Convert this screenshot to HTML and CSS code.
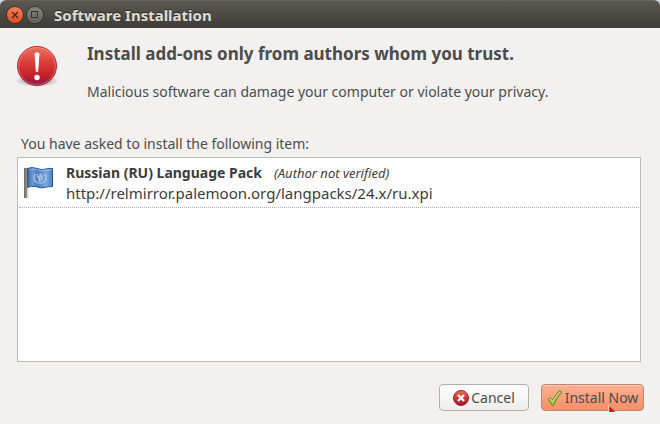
FILE: index.html
```
<!DOCTYPE html>
<html lang="en">
<head>
<meta charset="UTF-8">
<title>Software Installation</title>
<link rel="stylesheet" href="styles.css">
</head>
<body>

<div class="window">

	<header class="titlebar">
		<button class="winbtn close" type="button" aria-label="Close">
			<svg width="16" height="16" viewBox="0 0 16 16"><path d="M5 5l6 6M11 5l-6 6" stroke="#4a2115" stroke-width="1.200" fill="none"/></svg>
		</button>
		<button class="winbtn max" type="button" aria-label="Maximize">
			<svg width="16" height="16" viewBox="0 0 16 16"><rect x="4.500" y="4.500" width="6" height="6" stroke="#33322e" fill="none"/></svg>
		</button>
		<span class="title">Software Installation</span>
	</header>

	<main class="content">
		<div class="warning">
			<svg class="alert" width="44" height="44" viewBox="0 0 44 44">
				<defs>
					<radialGradient id="shadow">
						<stop offset="0.6" stop-color="#000" stop-opacity="0.2"/>
						<stop offset="1" stop-color="#000" stop-opacity="0"/>
					</radialGradient>
					<linearGradient id="red" x1="0" y1="0" x2="0" y2="1">
						<stop offset="0" stop-color="#ed7059"/>
						<stop offset="0.45" stop-color="#d73a38"/>
						<stop offset="0.75" stop-color="#c5202b"/>
						<stop offset="1" stop-color="#84184d"/>
					</linearGradient>
				</defs>
				<ellipse cx="22" cy="37" rx="22" ry="6" fill="url(#shadow)"/>
				<circle cx="22" cy="22" r="19.5" fill="url(#red)" stroke="#b72935"/>
				<circle cx="22" cy="22" r="18.4" fill="none" stroke="#fff" stroke-opacity="0.25"/>
				<path d="M20 9.500q2-1.600 4 0l-1.300 18q-.7.700-1.400 0z" fill="#fff" stroke="#fff" stroke-linejoin="round"/>
				<circle cx="22" cy="33.5" r="2.7" fill="#fff"/>
			</svg>
			<div class="message">
				<h1>Install add-ons only from authors whom you trust.</h1>
				<p>Malicious software can damage your computer or violate your privacy.</p>
			</div>
		</div>

		<p class="intro" id="intro">You have asked to install the following item:</p>

		<ul class="list" aria-labelledby="intro">
			<li class="item">
				<svg class="flag" width="32" height="32" viewBox="0 0 32 32">
					<defs>
						<linearGradient id="pole" x1="0" y1="0" x2="1" y2="0">
							<stop offset="0" stop-color="#6a6c64"/>
							<stop offset="0.5" stop-color="#8c8e87"/>
							<stop offset="0.6" stop-color="#d0d1cc"/>
							<stop offset="1" stop-color="#f4f4f2"/>
						</linearGradient>
						<linearGradient id="blue" x1="0" y1="0" x2="1" y2="0">
							<stop offset="0" stop-color="#3465a4"/>
							<stop offset="0.2" stop-color="#6c9bd2"/>
							<stop offset="0.4" stop-color="#4a7ebd"/>
							<stop offset="0.75" stop-color="#7ba8dc"/>
							<stop offset="1" stop-color="#4d80be"/>
						</linearGradient>
					</defs>
					<rect x="1" y="1" width="5" height="30" fill="url(#pole)"/>
					<path d="M4.500 1.500Q9 -0.500 14 1.500T23 2Q26 1 29.500 1.500V19.500Q25 19.500 21 20.500T13 19.500Q8 18.500 4.500 20.500z" fill="url(#blue)" stroke="#2b5794"/>
					<path d="M6 2.800Q10 1 14 2.700T23 3.200L28.300 2.700" fill="none" stroke="#a5c4ea" stroke-opacity="0.7"/>
					<g fill="none" stroke="#c5d9f0" stroke-opacity="0.7" stroke-width="1.300">
						<path d="M12.500 7q-3 4 0 7.500q2 2 5 1.500M21.500 7q3 4 0 7.500q-2 2-4.500 1.500"/>
						<path d="M14 7l2 5 2-5.500M15 13.500q2 1 4-1.500v-4M14 10h5M17 7v7"/>
					</g>
				</svg>
				<div class="info">
					<div class="head">
						<strong class="name">Russian (RU) Language Pack</strong>
						<em class="signer">(Author not verified)</em>
					</div>
					<div class="url">http://relmirror.palemoon.org/langpacks/24.x/ru.xpi</div>
				</div>
			</li>
		</ul>

		<div class="buttons">
			<button class="btn" type="button">
				<svg width="16" height="16" viewBox="0 0 16 16">
					<circle cx="8" cy="8" r="7.500" fill="url(#red)" stroke="#a91f30"/>
					<path d="M5 5l6 6M11 5l-6 6" stroke="#fff" stroke-width="2.400"/>
				</svg>
				Cancel
			</button>
			<button class="btn install" type="button">
				<svg width="16" height="16" viewBox="0 0 16 16">
					<path d="M1 9.500l2.500-1.800 2.300 2.800Q8 4.500 12.500 0.800l2.300 1.600Q9.500 7.500 6.500 15.200h-1.500Q3.500 12 1 9.500z" fill="#a3c644" stroke="#5c8518" stroke-linejoin="round"/>
					<path d="M2.500 9.500l1-.6 2.300 3Q8.500 5.500 12.500 2.200" fill="none" stroke="#d3e68c"/>
				</svg>
				Install Now
				<svg class="cursor" width="8" height="8" viewBox="0 0 8 8"><path d="M0.500 0v7.500h7z" fill="#fff"/><path d="M1.200 1v6h6z" fill="#f00008"/></svg>
			</button>
		</div>
	</main>

</div>

</body>
</html>
```
FILE: styles.css
```
* {
	box-sizing: border-box;
}

body {
	margin: 0;
	background: #d6dbe3;
	font-family: "Noto Sans", "Open Sans", sans-serif;
	font-size: 14px;
	line-height: 20px;
	color: #4c4c4c;
}

h1, p, ul {
	margin: 0;
	padding: 0;
}

.window {
	display: flex;
	flex-direction: column;
	min-height: 100vh;
	background: #f2f1f0;
	border-radius: 6px 6px 0 0;
}

.titlebar {
	display: flex;
	align-items: center;
	gap: 3px;
	height: 28px;
	padding: 0 7px;
	background: linear-gradient(#5c5850, #3d3c38);
	border-top: 1px solid #65625a;
	border-radius: 6px 6px 0 0;
}

.winbtn {
	display: flex;
	width: 16px;
	height: 16px;
	padding: 0;
	border: 0;
	border-radius: 50%;
	box-shadow: 0 0 0 1px #35342f;
}

.close {
	background: linear-gradient(#f37f59, #e0501f);
}

.max {
	margin-left: 1px;
	background: linear-gradient(#84827a, #66645d);
}

.title {
	margin-left: 8px;
	font-size: 15px;
	font-weight: bold;
	color: #dfdbd2;
	text-shadow: 0 -1px #2c2b28;
}

.content {
	display: flex;
	flex: 1;
	flex-direction: column;
	padding: 14px 16px 13px;
}

.warning {
	display: flex;
	align-items: flex-start;
	gap: 28px;
}

.alert {
	flex: none;
	margin: 2px 0 0 -1px;
}

h1 {
	font-size: 17px;
	line-height: 24px;
}

.message p {
	margin-top: 16px;
}

.intro {
	margin: 32px 5px 3px;
}

.list {
	flex: 1;
	margin: 0 3px 0 1px;
	background: #fff;
	border: 1px solid #bfbdb8;
	list-style: none;
}

.item {
	display: flex;
	align-items: center;
	gap: 11px;
	margin: 0 1px;
	padding: 5px 4px 4px;
	border-bottom: 1px dotted #b5b3ae;
	color: #3c3c3c;
}

.flag {
	flex: none;
}

.head {
	display: flex;
	align-items: baseline;
	gap: 12px;
}

.signer {
	font-size: 13px;
}

.url {
	font-size: 15px;
}

.buttons {
	display: flex;
	justify-content: flex-end;
	gap: 12px;
	margin-top: 22px;
}

.btn {
	position: relative;
	display: flex;
	align-items: center;
	justify-content: center;
	gap: 2px;
	min-width: 90px;
	height: 27px;
	padding: 0 4px;
	border: 1px solid #b3b0a9;
	border-radius: 4px;
	background: linear-gradient(#fff, #ededec);
	font: inherit;
	color: #4c4c4c;
	white-space: nowrap;
}

.install {
	min-width: 103px;
	border-color: #b58a78;
	background: linear-gradient(#ffb193, #f58e67);
	box-shadow: inset 0 1px #ffc3ab;
}

/* pointer over the button edge */
.cursor {
	position: absolute;
	right: 27px;
	bottom: -3px;
}
```
